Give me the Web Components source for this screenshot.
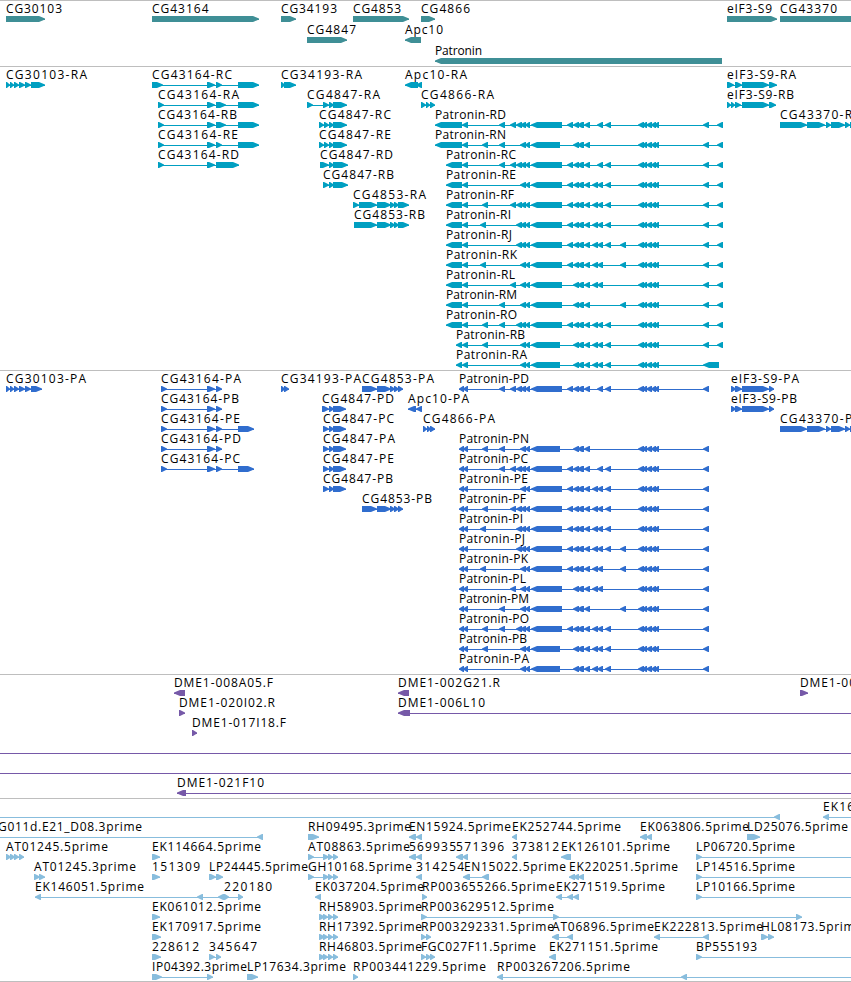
<!DOCTYPE html>
<html lang="en">
<head>
<meta charset="utf-8">
<title>Genome tracks</title>
<style>
  html, body { margin: 0; height: 982px; overflow: hidden; background: #fff; }
</style>
</head>
<body>
<genome-browser></genome-browser>
<script>
// Feature notation: label;labelStart;labelEnd;direction;exons[;lineFrom-lineTo]
const W = 860;

// Exons shared by the Patronin transcripts; flags switch the optional ones on.
function patronin(suffix, x, end, flags, tail) {
  const has = f => flags.split(' ').includes(f);
  const e = [];
  if (suffix[0] === 'P') e.push('459-464', '463-468');
  else if (x === 456) e.push('456-462', '462-468');
  else e.push(x + '-462', '462-468');
  if (has('a')) e.push('482-488');
  if (has('i')) e.push('480-486');
  if (has('b')) e.push('499-505');
  if (has('c')) e.push('510-516');
  if (has('t')) e.push('516-522');
  e.push('520-526', '525-530', has('s') ? '531-560' : '531-562');
  if (has('d')) e.push('567-573');
  e.push('573-579', '577-584', '584-590');
  if (has('e')) e.push('592-598', '597-603');
  if (has('f')) e.push('597-603');
  if (has('g')) e.push('605-611');
  if (has('h')) e.push('620-626');
  e.push('638-644', '642-647', '646-652', '651-656', '654-659');
  if (tail) e.push(tail);
  else { e.push('703-709'); if (suffix[0] === 'R') e.push('717-723'); }
  return `Patronin-${suffix};${x};${end};<;${e.join(',')}`;
}

const tail43370 = '780-807,807-825,826-831,831-845,845-850,850-858';
const rh = '319-325,323-328,328-333,333-338';
const at = '308-314,323-329,328-333,333-338';

const TRACKS = [
  { color: '#3f8f96', lane: 21, pad: 2, lanes: [
    ['CG30103;6;62;>;6-45', 'CG43164;152;208.5;>;152-259', 'CG34193;281;337;>;281-296', 'CG4853;353;401;>;353-409', 'CG4866;421;470;>;421-435', 'eIF3-S9;727;772;>;727-777', 'CG43370;780;837;>;780-870'],
    ['CG4847;307;356;>;307-347', 'Apc10;405;443;<;405-421'],
    ['Patronin;435;482;<;435-722'] ] },
  { color: '#009fc1', lane: 20, pad: 3, lanes: [
    ['CG30103-RA;6;87;>;6-10,10-14,14-19,19-25,25-31,31-45', 'CG43164-RC;152;232;>;152-163,207-215,216-222,238-259', 'CG34193-RA;281;362;>;281-285,284-296', 'Apc10-RA;405;467;<;405-418,416-422', 'eIF3-S9-RA;727;796;>;727-734,735-742,742-769,769-777'],
    ['CG43164-RA;158;239;>;158-164,207-215,216-226,238-259', 'CG4847-RA;307;380;>;307-313,323-329,329-334,333-347', 'CG4866-RA;421;494;>;421-426,426-430,430-435', 'eIF3-S9-RB;727;794;>;727-731,731-735,735-741,742-769,769-776'],
    ['CG43164-RB;158;237;>;158-164,207-215,216-226,238-259', 'CG4847-RC;319;391;>;319-324,324-329,329-334,333-347', patronin('RD', 435, 506, 'b c t d f g'), 'CG43370-RA;780;861;>;' + tail43370],
    ['CG43164-RE;158;238;>;158-164,207-215,216-222,238-259', 'CG4847-RE;319;391;>;319-324,324-329,329-334,333-347', patronin('RN', 435, 506, 'a b s')],
    ['CG43164-RD;158;239;>;158-164,207-215,216-239', 'CG4847-RD;320;393;>;320-329,329-334,333-348', patronin('RC', 446, 516, 'b c t d f g')],
    ['CG4847-RB;323;394;>;323-329,329-334,333-348', patronin('RE', 446, 516, 'd e g')],
    ['CG4853-RA;353;426;>;353-359,359-377,377-391,390-395,394-399,398-409', patronin('RF', 446, 514, 'a c t d e g')],
    ['CG4853-RB;354;425;>;354-377,377-391,390-395,394-399,398-409', patronin('RI', 446, 511, 'i t d e g')],
    [patronin('RJ', 446, 512, 't d e g h')],
    [patronin('RK', 446, 517, 'i d e h')],
    [patronin('RL', 446, 515, 'c e')],
    [patronin('RM', 446, 517, 'b h')],
    [patronin('RO', 446, 517, 'a b t d e g')],
    [patronin('RB', 456, 525, 'a s e g')],
    [patronin('RA', 456, 527, 's e g', '703-719')] ] },
  { color: '#306dce', lane: 20, pad: 3, lanes: [
    ['CG30103-PA;6;86;>;6-10,10-14,14-19,19-25,25-31,31-42', 'CG43164-PA;161;241;>;161-167,207-215,216-222', 'CG34193-PA;281;361;>;281-285,284-289', 'CG4853-PA;362;434;>;362-377,377-391,390-395,394-399,398-403', patronin('PD', 459, 529, 'b c t d f g'), 'eIF3-S9-PA;731;799;>;731-736,735-742,742-769,769-774'],
    ['CG43164-PB;161;239;>;161-167,207-215,216-222', 'CG4847-PD;322;394;>;322-329,329-334,333-346', 'Apc10-PA;408;469;<;408-416,416-422', 'eIF3-S9-PB;731;797;>;731-736,735-742,742-769,769-774'],
    ['CG43164-PE;161;240;>;161-167,207-215,216-222,238-254', 'CG4847-PC;323;394;>;323-329,329-334,333-346', 'CG4866-PA;423;495;>;423-427,427-431,430-435', 'CG43370-PA;780;861;>;' + tail43370],
    ['CG43164-PD;161;241;>;161-167,207-215,216-222', 'CG4847-PA;323;395;>;323-329,329-334,333-346', patronin('PN', 459, 529, 'a b s')],
    ['CG43164-PC;161;240;>;161-167,207-215,216-222,238-254', 'CG4847-PE;323;394;>;323-329,329-334,333-346', patronin('PC', 459, 528, 'b c t d f g')],
    ['CG4847-PB;323;393;>;323-329,329-334,333-346', patronin('PE', 459, 528, 'd e g')],
    ['CG4853-PB;362;432;>;362-377,377-391,390-395,394-399,398-403', patronin('PF', 459, 526, 'a c t d e g')],
    [patronin('PI', 459, 523, 'i t d e g')],
    [patronin('PJ', 459, 525, 't d e g h')],
    [patronin('PK', 459, 528, 'i d e h')],
    [patronin('PL', 459, 526, 'c e')],
    [patronin('PM', 459, 529, 'b h')],
    [patronin('PO', 459, 529, 'a b t d e g')],
    [patronin('PB', 459, 527, 'a s e g')],
    [patronin('PA', 459, 529, 's e g')] ] },
  { color: '#7659a8', lane: 20, pad: 3, lanes: [
    ['DME1-008A05.F;174;273;<;174-185', 'DME1-002G21.R;398;500;<;398-409', 'DME1-00;800;856;>;800-808'],
    ['DME1-020I02.R;179;275;>;179-185', `DME1-006L10;398;485;<;398-410;398-${W}`],
    ['DME1-017I18.F;192;286;>;192-197'],
    [`;0;0;<;;0-${W}`],
    [`;0;0;<;;0-${W}`],
    [`DME1-021F10;177;264;<;177-186;177-${W}`] ] },
  { color: '#88bddd', lane: 20, pad: 2, lanes: [
    [';0;0;<;774-780;0-780', `EK16;823;854;<;823-829;823-${W}`],
    ['G011d.E21_D08.3prime;-2;142;<;257-263;0-258', 'RH09495.3prime;308;411;>;308-319', 'EN15924.5prime;409;511;<;409-416,416-422', 'EK252744.5prime;512;621;<;512-517', 'EK063806.5prime;640;749;<;640-647,646-652', 'LD25076.5prime;747;848;>;747-760'],
    ['AT01245.5prime;6;108;>;6-11,10-15,14-19,19-24', 'EK114664.5prime;152;261;>;152-160', 'AT08863.5prime;308;410;>;' + at, '569935;409;456;<;409-416,416-422', '571396;456;504;<;456-463,462-468', '373812;512;559;<;512-517', 'EK126101.5prime;561;670;<;561-571', `LP06720.5prime;696;795;>;696-702;696-${W}`],
    ['AT01245.3prime;34;136;>;34-40,39-45', '151309;152;200;>;152-160', 'LP24445.5prime;209;308;>;209-216,216-223', 'GH10168.5prime;308;412;>;' + at, '314254;416;464;<;416-422', 'EN15022.5prime;464;566;<;463-470,482-489', 'EK220251.5prime;569;678;<;569-575,573-579,578-584', `LP14516.5prime;696;795;>;696-702;696-${W}`],
    ['EK146051.5prime;35;144;<;35-41,197-203,218-224', '220180;224;272;>;224-229,238-243', 'EK037204.5prime;315;424;<;315-321', 'RP003655266.5prime;422;555;>;422-427', 'EK271519.5prime;556;665;<;556-562,567-573,573-579', `LP10166.5prime;696;795;>;696-702;696-${W}`],
    ['EK061012.5prime;152;261;>;152-160', 'RH58903.5prime;319;422;>;' + rh, 'RP003629512.5prime;421;554;>;421-427,553-559,796-802'],
    ['EK170917.5prime;152;261;>;152-161', 'RH17392.5prime;319;422;>;' + rh, 'RP003292331.5prime;421;554;>;421-426,426-431', 'AT06896.5prime;552;654;<;552-559,567-573', 'EK222813.5prime;654;763;<;654-660,703-709', 'HL08173.5prime;761;862;>;761-768,768-774'],
    ['228612;152;199;>;152-161', '345647;209;257;>;209-215,216-221', 'RH46803.5prime;319;422;>;' + rh, 'FGC027F11.5prime;421;536;>;421-426,426-431,430-435', 'EK271151.5prime;549;658;<;549-556', `BP555193;696;757;>;696-702;696-${W}`],
    ['IP04392.3prime;152;247;>;152-162,207-213', 'LP17634.3prime;247;346;>;247-258', 'RP003441229.5prime;353;486;>;353-358', `RP003267206.5prime;497;630;<;497-503,681-687;497-${W}`] ] }
];

// One labelled feature, pinned at its genomic position within the lane.
class GeneFeature extends HTMLElement {
  connectedCallback() {
    const [label, xs, ends, dir, exonText, line] = this.getAttribute('data').split(';');
    const x = +xs, end = +ends;
    const exons = exonText ? exonText.split(',').map(s => s.split('-').map(Number)) : [];
    const [l0, l1] = line ? line.split('-').map(Number) : [exons[0][0], exons[exons.length - 1][1]];
    const shapes = exons.map(([a, b]) => {
      const w = b - a, h = Math.min(w, 6), fwd = dir === '>';
      const tip = (fwd ? b : a) - x, base = (fwd ? a : b) - x, s = fwd ? -1 : 1;
      // Long exons taper in two steps, short ones are plain triangles.
      const shoulder = w > 7 ? [3, 1.8] : [h / 2, 2];
      return `<path d="M${base} 15H${tip + s * (w > 7 ? h : h - 1)}` +
        `L${tip + s * shoulder[0]} ${18 - shoulder[1]}L${tip} 17.4V18.6` +
        `L${tip + s * shoulder[0]} ${18 + shoulder[1]}L${tip + s * (w > 7 ? h : h - 1)} 21H${base}Z"/>`;
    }).join('');
    const text = label ? `<text x="0" y="12" textLength="${end - x}">${label}</text>` : '';
    const root = this.attachShadow({ mode: 'open' });
    root.innerHTML = `<style>
      :host { display: block; position: absolute; top: 0; left: ${x}px; }
      svg { display: block; overflow: visible; fill: var(--feature-color); }
      rect { shape-rendering: crispEdges; }
      text { fill: #000; font: 12px "Open Sans", "DejaVu Sans", sans-serif; }
    </style><svg width="1" height="20"><rect x="${l0 - x}" y="18" width="${l1 - l0}" height="1"/>${shapes}${text}</svg>`;
  }
}
customElements.define('gene-feature', GeneFeature);

class TrackLane extends HTMLElement {
  constructor() {
    super();
    this.attachShadow({ mode: 'open' }).innerHTML = `<style>
      :host { display: block; position: relative; height: var(--lane-height); }
    </style><slot></slot>`;
  }
}
customElements.define('track-lane', TrackLane);

class GenomeTrack extends HTMLElement {
  constructor() {
    super();
    this.attachShadow({ mode: 'open' }).innerHTML = `<style>
      :host { display: flex; flex-direction: column; border-top: 1px solid #bebebe; }
    </style><slot></slot>`;
  }
}
customElements.define('genome-track', GenomeTrack);

class GenomeBrowser extends HTMLElement {
  connectedCallback() {
    this.attachShadow({ mode: 'open' }).innerHTML = `<style>
      :host { display: flex; flex-direction: column; width: 851px; height: 982px; overflow: hidden; background: #fff; }
      footer { border-top: 1px solid #bebebe; }
    </style>` + TRACKS.map(t =>
      `<genome-track style="--feature-color:${t.color};--lane-height:${t.lane}px;padding-bottom:${t.pad}px">` +
      t.lanes.map(l => `<track-lane>${l.map(f => `<gene-feature data="${f.replace(/</g, '&lt;')}"></gene-feature>`).join('')}</track-lane>`).join('') +
      '</genome-track>').join('') + '<footer></footer>';
  }
}
customElements.define('genome-browser', GenomeBrowser);
</script>
</body>
</html>
